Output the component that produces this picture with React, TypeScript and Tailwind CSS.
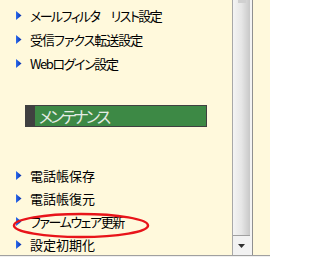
import React from "react";

const Tri = () => (
  <svg width="6" height="9" viewBox="0 0 6 9" className="shrink-0">
    <defs>
      <linearGradient id="tg" x1="0" y1="0" x2="1" y2="0">
        <stop offset="0" stopColor="#2a6cf0" />
        <stop offset="1" stopColor="#0a2fa8" />
      </linearGradient>
    </defs>
    <polygon points="0,0 5.5,4.5 0,9" fill="url(#tg)" />
  </svg>
);

const Row = ({ label, h, tr }: { label: string; h: string; tr: string }) => (
  <div className={`flex items-center ${h} pl-[16px] gap-[8px]`}>
    <Tri />
    <span className={`text-[13px] leading-none text-black whitespace-pre [font-feature-settings:'palt'] ${tr}`}>{label}</span>
  </div>
);

export default function App() {
  return (
    <div
      className="relative w-[270px] h-[257px] bg-[#fff9dc] overflow-hidden flex flex-col"
      style={{ fontFamily: '"Noto Sans CJK JP", "Noto Sans", sans-serif' }}
    >
      <div className="flex flex-1">
        <div className="w-[232px] flex flex-col pt-[3px]">
          <Row label="メールフィルタ　リスト設定" h="h-[24px]" tr="tracking-[-1.6px]" />
          <Row label="受信ファクス転送設定" h="h-[24px]" tr="tracking-[-1px]" />
          <Row label="Webログイン設定" h="h-[24px]" tr="tracking-[-1.4px]" />
          <div className="mt-[30px] ml-[25px] w-[182px] h-[22px] border border-[#404040] bg-[#3d8945] flex">
            <div className="w-[9px] bg-[#404040]" />
            <span className="pl-[4px] text-[16px] leading-[20px] text-[#e4ece4] tracking-[-2.8px] [font-feature-settings:'palt']">メンテナンス</span>
          </div>
          <div className="mt-[37px]">
            <Row label="電話帳保存" h="h-[23px]" tr="" />
            <Row label="電話帳復元" h="h-[23px]" tr="" />
            <Row label="ファームウェア更新" h="h-[23px]" tr="tracking-[-1.4px]" />
            <Row label="設定初期化" h="h-[22px]" tr="" />
          </div>
        </div>
        <div className="w-[21px] flex">
          <div className="w-[18px] flex flex-col border-l border-[#a8a8a8]">
            <div className="flex-1 bg-gradient-to-r from-[#f4f4f4] via-[#e6e6e6] to-[#c8c8c8] border-b border-[#a0a0a0] flex justify-center">
              <div className="w-[8px] h-[3px] bg-[#d0d0d0] mt-0" />
            </div>
            <div className="h-[19px] bg-[#f2f2f2] flex items-center justify-center">
              <svg width="7" height="4" viewBox="0 0 7 4">
                <polygon points="0,0 7,0 3.5,4" fill="#303030" />
              </svg>
            </div>
          </div>
          <div className="w-[2px] bg-[#f4f4f4]" />
          <div className="w-[1px] bg-[#909090]" />
        </div>
        <div className="flex-1" />
      </div>
      <div className="h-[1px] bg-[#a0a0a0]" />
      <div className="h-[2px] bg-[#f0f0f0]" />
      <svg
        className="absolute left-[12px] top-[212px]"
        width="138"
        height="27"
        viewBox="0 0 138 27"
      >
        <ellipse cx="69" cy="13.5" rx="67" ry="11.5" fill="none" stroke="#e8141a" strokeWidth="2.5" />
      </svg>
    </div>
  );
}
